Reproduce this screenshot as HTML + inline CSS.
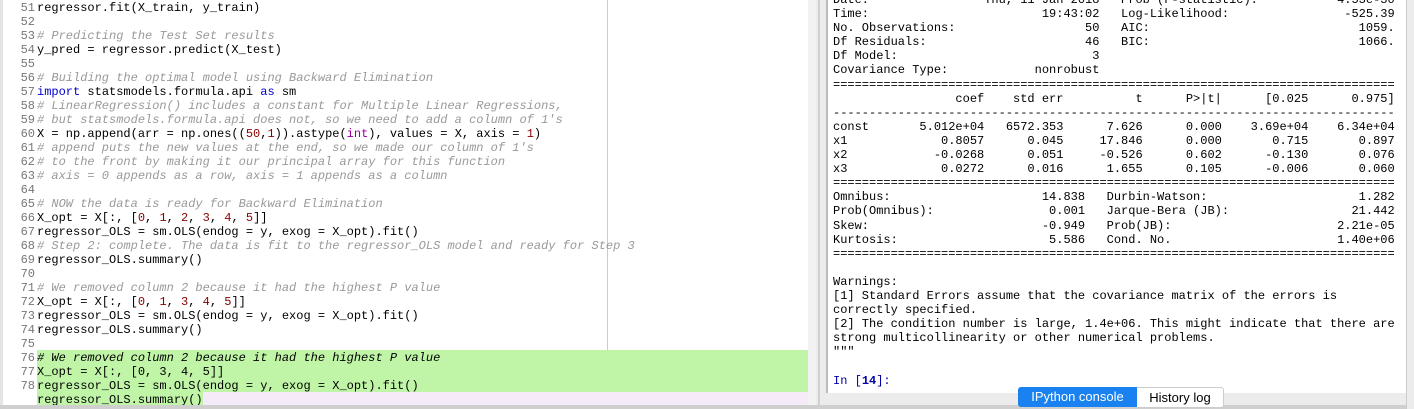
<!DOCTYPE html>
<html><head><style>
body{margin:0;width:1414px;height:409px;overflow:hidden;background:#ececec;font-family:"Liberation Mono",monospace;font-size:12px;position:relative}
.ed{position:absolute;left:0;top:0;width:808px;height:405px;background:#fff;overflow:hidden}
.ln{position:absolute;left:0;width:35px;text-align:right;color:#777;height:14px;line-height:14px}
.tx{position:absolute;left:37px;height:14px;line-height:14px;white-space:pre;color:#000}
.c{color:#999;font-style:italic}.k{color:#00c}.n{color:#800}.b{color:#909}
.hl{position:absolute;left:37px;width:771px;height:14px;background:#c0f5a8}
.con{position:absolute;left:826px;top:0;width:580px;height:393px;background:#fff;border-left:2px solid #bbb;overflow:hidden}
.con pre{margin:0;position:absolute;left:5px;top:-7px;font-family:"Liberation Mono",monospace;font-size:12px;line-height:14.1px;color:#000}
</style></head><body>
<div class="ed">
<div style="position:absolute;left:0;top:0;width:3px;height:409px;background:#e4e4e4"></div>
<div style="position:absolute;left:607px;top:0;width:1px;height:409px;background:#ccc"></div>
<div class="hl" style="top:350px"></div><div class="hl" style="top:364px"></div><div class="hl" style="top:378px"></div>
<div style="position:absolute;left:37px;top:392px;width:771px;height:14px;background:#f5eaf8"></div>
<div style="position:absolute;left:37px;top:392px;width:166px;height:14px;background:#c0f5a8"></div>
<div class="ln" style="top:1px">51</div><div class="tx" style="top:1px">regressor.fit(X_train, y_train)</div>
<div class="ln" style="top:15px">52</div>
<div class="ln" style="top:29px">53</div><div class="tx c" style="top:29px"># Predicting the Test Set results</div>
<div class="ln" style="top:43px">54</div><div class="tx" style="top:43px">y_pred = regressor.predict(X_test)</div>
<div class="ln" style="top:57px">55</div>
<div class="ln" style="top:71px">56</div><div class="tx c" style="top:71px"># Building the optimal model using Backward Elimination</div>
<div class="ln" style="top:85px">57</div><div class="tx" style="top:85px"><span class="k">import</span> statsmodels.formula.api <span class="k">as</span> sm</div>
<div class="ln" style="top:99px">58</div><div class="tx c" style="top:99px"># LinearRegression() includes a constant for Multiple Linear Regressions,</div>
<div class="ln" style="top:113px">59</div><div class="tx c" style="top:113px"># but statsmodels.formula.api does not, so we need to add a column of 1's</div>
<div class="ln" style="top:127px">60</div><div class="tx" style="top:127px">X = np.append(arr = np.ones((<span class="n">50</span>,<span class="n">1</span>)).astype(<span class="b">int</span>), values = X, axis = <span class="n">1</span>)</div>
<div class="ln" style="top:141px">61</div><div class="tx c" style="top:141px"># append puts the new values at the end, so we made our column of 1's</div>
<div class="ln" style="top:155px">62</div><div class="tx c" style="top:155px"># to the front by making it our principal array for this function</div>
<div class="ln" style="top:169px">63</div><div class="tx c" style="top:169px"># axis = 0 appends as a row, axis = 1 appends as a column</div>
<div class="ln" style="top:183px">64</div>
<div class="ln" style="top:197px">65</div><div class="tx c" style="top:197px"># NOW the data is ready for Backward Elimination</div>
<div class="ln" style="top:211px">66</div><div class="tx" style="top:211px">X_opt = X[:, [<span class="n">0</span>, <span class="n">1</span>, <span class="n">2</span>, <span class="n">3</span>, <span class="n">4</span>, <span class="n">5</span>]]</div>
<div class="ln" style="top:225px">67</div><div class="tx" style="top:225px">regressor_OLS = sm.OLS(endog = y, exog = X_opt).fit()</div>
<div class="ln" style="top:239px">68</div><div class="tx c" style="top:239px"># Step 2: complete. The data is fit to the regressor_OLS model and ready for Step 3</div>
<div class="ln" style="top:253px">69</div><div class="tx" style="top:253px">regressor_OLS.summary()</div>
<div class="ln" style="top:267px">70</div>
<div class="ln" style="top:281px">71</div><div class="tx c" style="top:281px"># We removed column 2 because it had the highest P value</div>
<div class="ln" style="top:295px">72</div><div class="tx" style="top:295px">X_opt = X[:, [<span class="n">0</span>, <span class="n">1</span>, <span class="n">3</span>, <span class="n">4</span>, <span class="n">5</span>]]</div>
<div class="ln" style="top:309px">73</div><div class="tx" style="top:309px">regressor_OLS = sm.OLS(endog = y, exog = X_opt).fit()</div>
<div class="ln" style="top:323px">74</div><div class="tx" style="top:323px">regressor_OLS.summary()</div>
<div class="ln" style="top:337px">75</div>
<div class="ln" style="top:351px">76</div><div class="tx" style="top:351px;font-style:italic"># We removed column 2 because it had the highest P value</div>
<div class="ln" style="top:365px">77</div><div class="tx" style="top:365px">X_opt = X[:, [0, 3, 4, 5]]</div>
<div class="ln" style="top:379px">78</div><div class="tx" style="top:379px">regressor_OLS = sm.OLS(endog = y, exog = X_opt).fit()</div>
<div class="tx" style="top:393px">regressor_OLS.summary()</div>
</div>
<div style="position:absolute;left:808px;top:0;width:8px;height:409px;background:#f2f2f2"></div>
<div style="position:absolute;left:818px;top:0;width:2px;height:409px;background:#d0d0d0"></div>
<div style="position:absolute;left:0;top:405px;width:1414px;height:4px;background:#cfcfcf"></div>
<div class="con"><pre>Date:                Thu, 11 Jan 2018   Prob (F-statistic):           4.53e-30
Time:                        19:43:02   Log-Likelihood:                -525.39
No. Observations:                  50   AIC:                             1059.
Df Residuals:                      46   BIC:                             1066.
Df Model:                           3
Covariance Type:            nonrobust
==============================================================================
                 coef    std err          t      P>|t|      [0.025      0.975]
------------------------------------------------------------------------------
const       5.012e+04   6572.353      7.626      0.000    3.69e+04    6.34e+04
x1             0.8057      0.045     17.846      0.000       0.715       0.897
x2            -0.0268      0.051     -0.526      0.602      -0.130       0.076
x3             0.0272      0.016      1.655      0.105      -0.006       0.060
==============================================================================
Omnibus:                     14.838   Durbin-Watson:                     1.282
Prob(Omnibus):                0.001   Jarque-Bera (JB):                 21.442
Skew:                        -0.949   Prob(JB):                       2.21e-05
Kurtosis:                     5.586   Cond. No.                       1.40e+06
==============================================================================

Warnings:
[1] Standard Errors assume that the covariance matrix of the errors is
correctly specified.
[2] The condition number is large, 1.4e+06. This might indicate that there are
strong multicollinearity or other numerical problems.
"""

<span style="color:#00a">In [<b>14</b>]:</span></pre></div>
<div style="position:absolute;left:1406px;top:0;width:8px;height:409px;background:#ececec;border-left:1px solid #ccc"></div>
<div style="position:absolute;left:1018px;top:387px;width:119px;height:20px;background:#1a82f0;color:#fff;font-family:'Liberation Sans',sans-serif;font-size:13px;line-height:20px;text-align:center;border-radius:3px 0 0 3px">IPython console</div>
<div style="position:absolute;left:1137px;top:387px;width:86px;height:19px;background:#fff;border:1px solid #ccc;border-left:none;color:#000;font-family:'Liberation Sans',sans-serif;font-size:13px;line-height:19px;text-align:center;border-radius:0 3px 3px 0">History log</div>
</body></html>
